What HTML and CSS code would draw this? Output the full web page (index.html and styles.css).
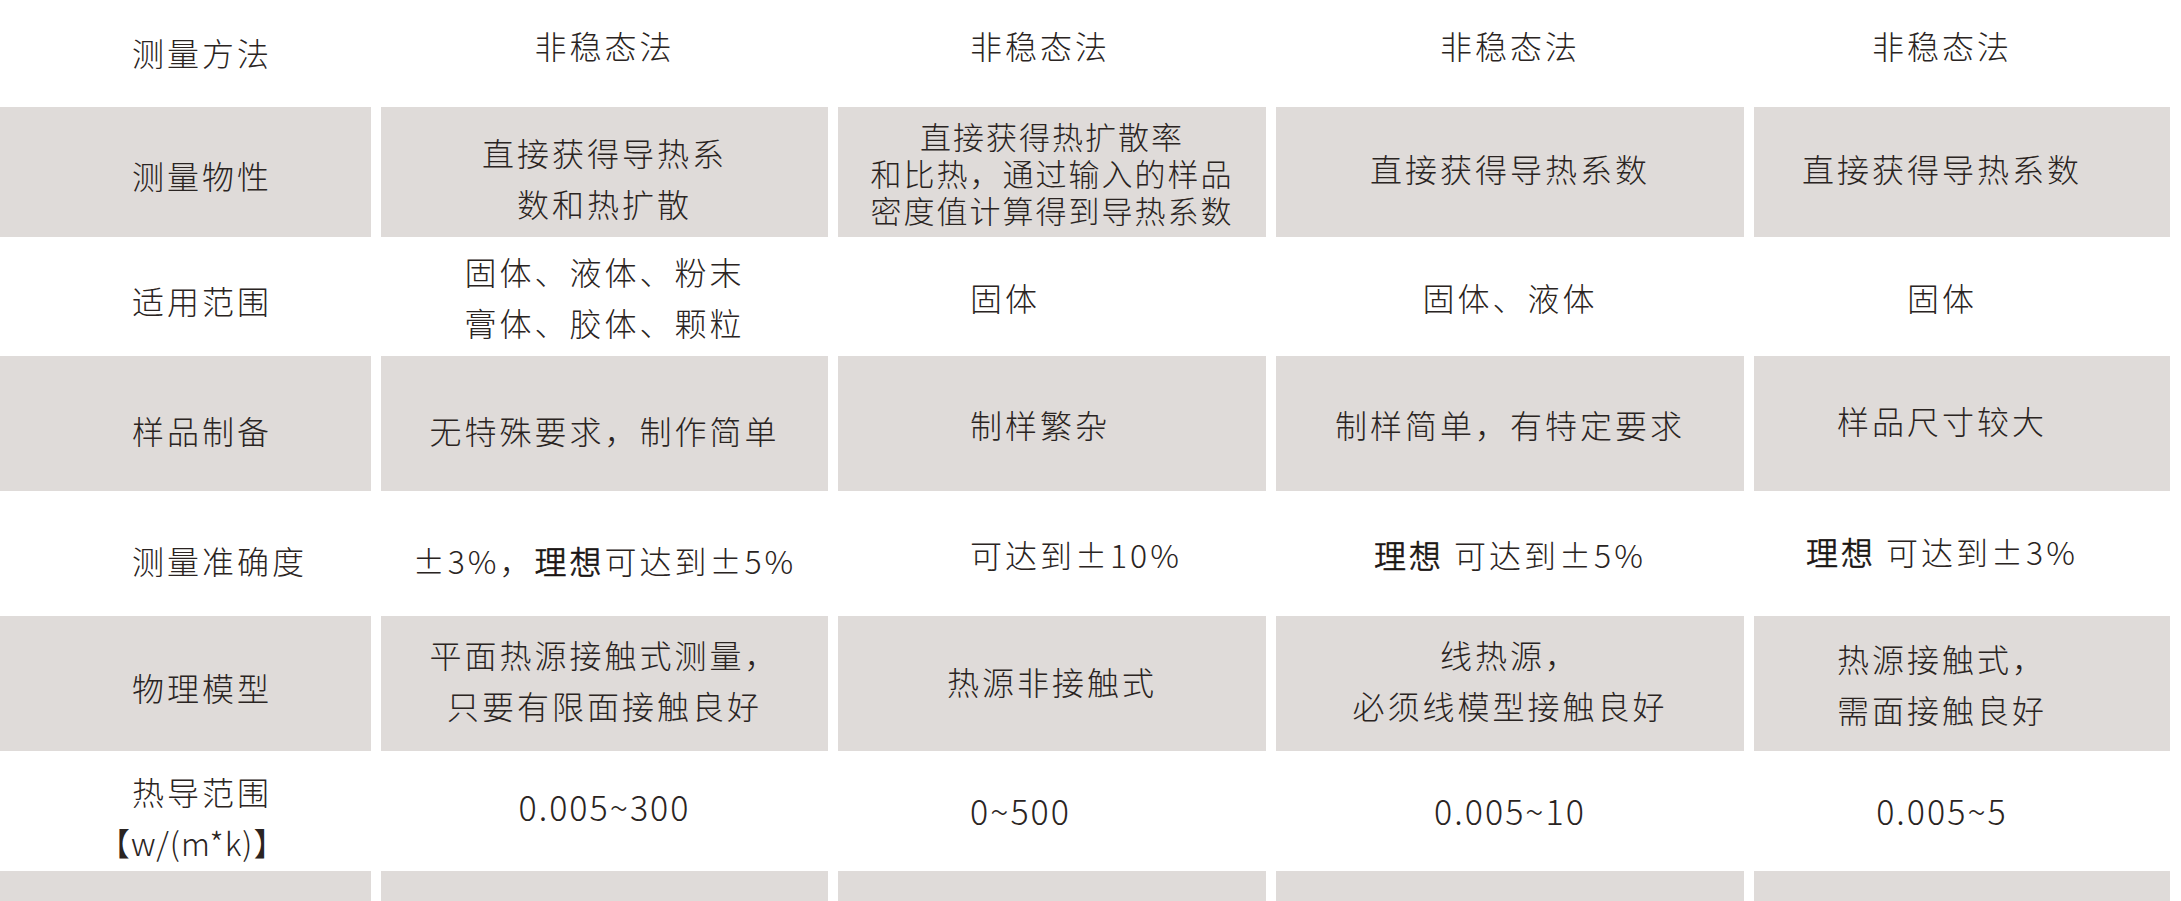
FILE: index.html
```html
<!DOCTYPE html>
<html lang="zh-CN">
<head>
<meta charset="utf-8">
<title>测量方法对比</title>
<link rel="stylesheet" href="styles.css">
</head>
<body>
<div class="table">
  <!-- row 1 -->
  <div class="cell label r1"><span>测量方法</span></div>
  <div class="cell r1"><span>非稳态法</span></div>
  <div class="cell c3 left r1"><span>非稳态法</span></div>
  <div class="cell r1"><span>非稳态法</span></div>
  <div class="cell c5 r1"><span>非稳态法</span></div>

  <!-- row 2 -->
  <div class="cell label gray"><span>测量物性</span></div>
  <div class="cell gray two down"><span>直接获得导热系<br>数和热扩散</span></div>
  <div class="cell c3 gray three"><span>直接获得热扩散率<br>和比热，通过输入的样品<br>密度值计算得到导热系数</span></div>
  <div class="cell gray up"><span>直接获得导热系数</span></div>
  <div class="cell c5 gray up"><span>直接获得导热系数</span></div>

  <!-- row 3 -->
  <div class="cell label"><span>适用范围</span></div>
  <div class="cell two"><span>固体、液体、粉末<br>膏体、胶体、颗粒</span></div>
  <div class="cell c3 left"><span>固体</span></div>
  <div class="cell"><span>固体、液体</span></div>
  <div class="cell c5"><span>固体</span></div>

  <!-- row 4 -->
  <div class="cell label gray down"><span>样品制备</span></div>
  <div class="cell gray down"><span>无特殊要求，制作简单</span></div>
  <div class="cell c3 left gray"><span>制样繁杂</span></div>
  <div class="cell gray"><span>制样简单，有特定要求</span></div>
  <div class="cell c5 gray up"><span>样品尺寸较大</span></div>

  <!-- row 5 -->
  <div class="cell label down"><span>测量准确度</span></div>
  <div class="cell down"><span>±3%，<b>理想</b>可达到±5%</span></div>
  <div class="cell c3 left"><span>可达到±10%</span></div>
  <div class="cell"><span><b>理想</b> 可达到±5%</span></div>
  <div class="cell c5 up-s"><span><b>理想</b> 可达到±3%</span></div>

  <!-- row 6 -->
  <div class="cell label gray"><span>物理模型</span></div>
  <div class="cell gray two up"><span>平面热源接触式测量，<br>只要有限面接触良好</span></div>
  <div class="cell c3 gray up-s"><span>热源非接触式</span></div>
  <div class="cell gray two up"><span>线热源，<br>必须线模型接触良好</span></div>
  <div class="cell c5 gray two"><span>热源接触式，<br>需面接触良好</span></div>

  <!-- row 7 -->
  <div class="cell label two down"><span class="stack"><span class="line">热导范围</span><span class="line unit">【w/(m*k)】</span></span></div>
  <div class="cell num up"><span>0.005~300</span></div>
  <div class="cell c3 left num"><span>0~500</span></div>
  <div class="cell num"><span>0.005~10</span></div>
  <div class="cell c5 num"><span>0.005~5</span></div>

  <!-- row 8 -->
  <div class="cell label gray"></div>
  <div class="cell gray"></div>
  <div class="cell c3 gray"></div>
  <div class="cell gray"></div>
  <div class="cell c5 gray"></div>
</div>
</body>
</html>
```

FILE: styles.css
```css
html, body {
  margin: 0;
  padding: 0;
  background: #ffffff;
}

body {
  font-family: "Noto Sans CJK SC", "Noto Sans", sans-serif;
  font-weight: 300;
  color: #2a2422;
  overflow: hidden;
}

.table {
  display: grid;
  grid-template-columns: 371px 447px 428px 468px 416px;
  grid-template-rows: 107px 130px 119px 135px 125px 135px 120px 60px;
  column-gap: 10px;
  width: 2170px;
}

.cell {
  display: flex;
  align-items: center;
  justify-content: center;
  text-align: center;
  font-size: 32px;
  letter-spacing: 3px;
  line-height: 40px;
  white-space: nowrap;
  box-sizing: border-box;
}

.gray {
  background: #dfdbd9;
}

.label {
  justify-content: flex-start;
  text-align: left;
  padding-left: 132px;
  padding-top: 6px;
}

.r1 {
  padding-bottom: 18px;
}

.label.r1 {
  padding-top: 0;
  padding-bottom: 4px;
}

.left {
  justify-content: flex-start;
  text-align: left;
  padding-left: 132px;
}

.c5 {
  padding-right: 40px;
}

.two {
  line-height: 51px;
}

.three {
  font-size: 31px;
  letter-spacing: 2px;
  line-height: 37px;
}

.down {
  padding-top: 12px;
}

.up {
  padding-bottom: 8px;
}

.up-s {
  padding-bottom: 5px;
}

.num {
  font-size: 34px;
  letter-spacing: 2px;
}

.stack {
  display: flex;
  flex-direction: column;
  align-items: flex-start;
}

.line {
  display: block;
}

.unit {
  margin-left: -34px;
  letter-spacing: 1px;
}

b {
  font-weight: inherit;
  color: #1a1513;
  -webkit-text-stroke: 0.7px #1a1513;
}
```
